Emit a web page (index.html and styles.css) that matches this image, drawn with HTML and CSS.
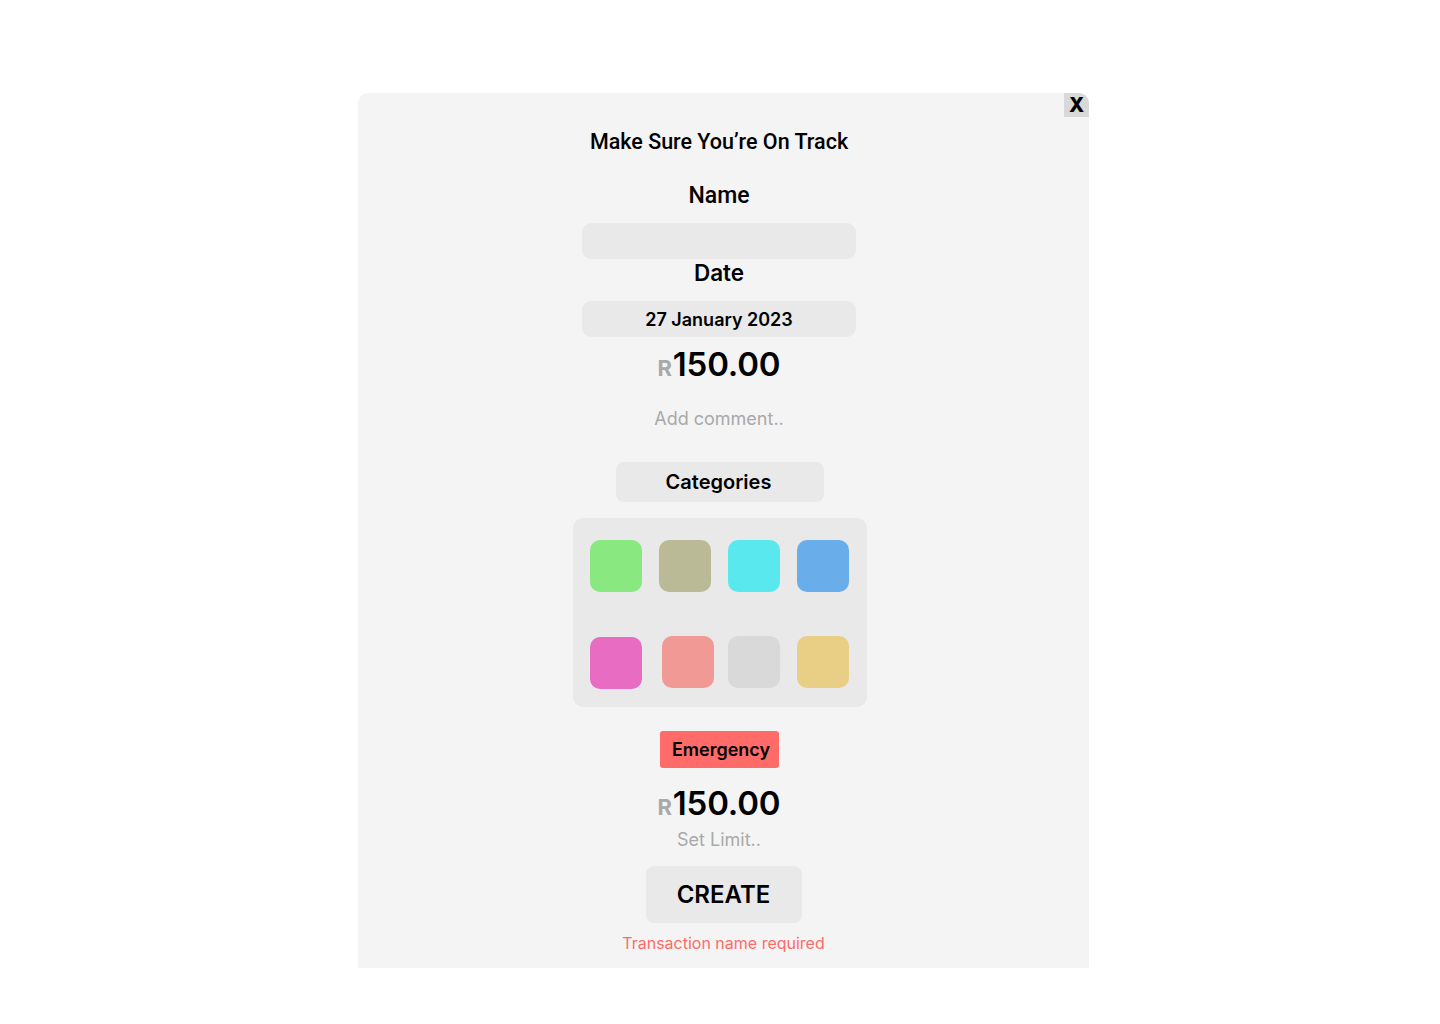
FILE: index.html
```html
<!DOCTYPE html>
<html lang="en">
<head>
<meta charset="utf-8">
<title>Make Sure You're On Track</title>
<link rel="stylesheet" href="styles.css">
</head>
<body>
<div class="page">
  <div class="panel">
    <button class="close">X</button>
    <div class="form">
      <h1 class="title">Make Sure You’re On Track</h1>
      <div class="label label-name">Name</div>
      <div class="field field-name"></div>
      <div class="label label-date">Date</div>
      <div class="field field-date">27 January 2023</div>
      <div class="amount amount-1"><span class="cur">R</span>150.00</div>
      <div class="hint hint-comment">Add comment..</div>
      <div class="cat-btn">Categories</div>
      <div class="grid">
        <div class="sw sw-green"></div>
        <div class="sw sw-olive"></div>
        <div class="sw sw-cyan"></div>
        <div class="sw sw-blue"></div>
        <div class="sw sw-pink"></div>
        <div class="sw sw-salmon"></div>
        <div class="sw sw-grey"></div>
        <div class="sw sw-yellow"></div>
      </div>
      <div class="tag">Emergency</div>
      <div class="amount amount-2"><span class="cur">R</span>150.00</div>
      <div class="hint hint-limit">Set Limit..</div>
    </div>
    <div class="actions">
      <button class="create">CREATE</button>
      <div class="error">Transaction name required</div>
    </div>
  </div>
</div>
</body>
</html>
```
FILE: styles.css
```css
* { box-sizing: border-box; }
html, body { margin: 0; padding: 0; background: #ffffff; }
body { font-family: Inter, "Noto Sans", sans-serif; color: #000; }

.page {
  padding: 93px 0 0 358px;
  height: 1024px;
}

.panel {
  position: relative;
  width: 731px;
  height: 875px;
  background: #f4f4f4;
  border-radius: 10px 10px 0 0;
  overflow: hidden;
  display: flex;
  flex-direction: column;
  align-items: center;
}

.close {
  position: absolute;
  top: 0;
  right: 0;
  width: 25px;
  height: 24px;
  border: 0;
  padding: 0;
  background: #d9d9d9;
  font-family: Inter, sans-serif;
  font-weight: 800;
  font-size: 20px;
  line-height: 24px;
  color: #000;
  text-align: center;
}

.form {
  width: 100%;
  padding-right: 9px;
  display: flex;
  flex-direction: column;
  align-items: center;
}

.title {
  margin: 37px 0 0;
  font-family: Roboto, sans-serif;
  font-weight: 500;
  font-size: 21.5px;
  line-height: 24px;
}

.label {
  font-family: Roboto, sans-serif;
  font-weight: 500;
  font-size: 23px;
  line-height: 28px;
}
.label-name { margin-top: 28px; }
.label-date { margin-top: 0; font-family: Inter, sans-serif; font-weight: 600; font-size: 22.5px; }

.field {
  margin-top: 14px;
  width: 274px;
  height: 36px;
  border-radius: 9px;
  background: #e9e9e9;
}
.field-name { margin-top: 13px; }
.field-date {
  display: flex;
  align-items: center;
  justify-content: center;
  font-weight: 600;
  font-size: 18px;
}

.amount {
  height: 40px;
  display: flex;
  align-items: baseline;
  font-weight: 600;
  font-size: 33px;
  line-height: 40px;
  letter-spacing: -0.2px;
}
.amount .cur {
  font-size: 22px;
  color: #a9a9a9;
  font-weight: 700;
  margin-right: 1px;
}
.amount-1 { margin-top: 7px; }
.amount-2 { margin-top: 15px; }

.hint {
  font-size: 18px;
  line-height: 24px;
  color: #a9a9a9;
}
.hint-comment { margin-top: 23px; }
.hint-limit { margin-top: 5px; }

.cat-btn {
  margin-top: 31px;
  margin-left: 2px;
  width: 208px;
  height: 40px;
  padding-right: 3px;
  border-radius: 8px;
  background: #e9e9e9;
  display: flex;
  align-items: center;
  justify-content: center;
  font-weight: 600;
  font-size: 20px;
}

.grid {
  margin-top: 16px;
  margin-left: 2px;
  width: 294px;
  height: 189px;
  border-radius: 10px;
  background: #e9e9e9;
  padding: 22px 17px 0;
  display: grid;
  grid-template-columns: repeat(4, 52px);
  grid-auto-rows: 52px;
  column-gap: 17px;
  row-gap: 44px;
}

.sw { width: 52px; height: 52px; border-radius: 10px; }
.sw-green { background: #89e87f; }
.sw-olive { background: #babb96; }
.sw-cyan { background: #58e8ee; }
.sw-blue { background: #69aeea; }
.sw-pink { background: #e76cc2; margin-top: 1px; }
.sw-salmon { background: #f09995; margin-left: 3px; }
.sw-grey { background: #d9d9d9; }
.sw-yellow { background: #e9cf86; }

.tag {
  margin-top: 24px;
  margin-left: 1px;
  height: 37px;
  padding: 0 9px 0 12px;
  border-radius: 3px;
  background: #ff6b68;
  display: flex;
  align-items: center;
  font-weight: 600;
  font-size: 18px;
}

.actions {
  width: 100%;
  display: flex;
  flex-direction: column;
  align-items: center;
}

.create {
  margin-top: 14px;
  width: 156px;
  height: 57px;
  border: 0;
  border-radius: 8px;
  background: #e9e9e9;
  font-family: Inter, sans-serif;
  font-weight: 600;
  font-size: 24px;
  color: #000;
}

.error {
  margin-top: 10px;
  font-size: 16px;
  line-height: 20px;
  color: #ff6b68;
}
```
